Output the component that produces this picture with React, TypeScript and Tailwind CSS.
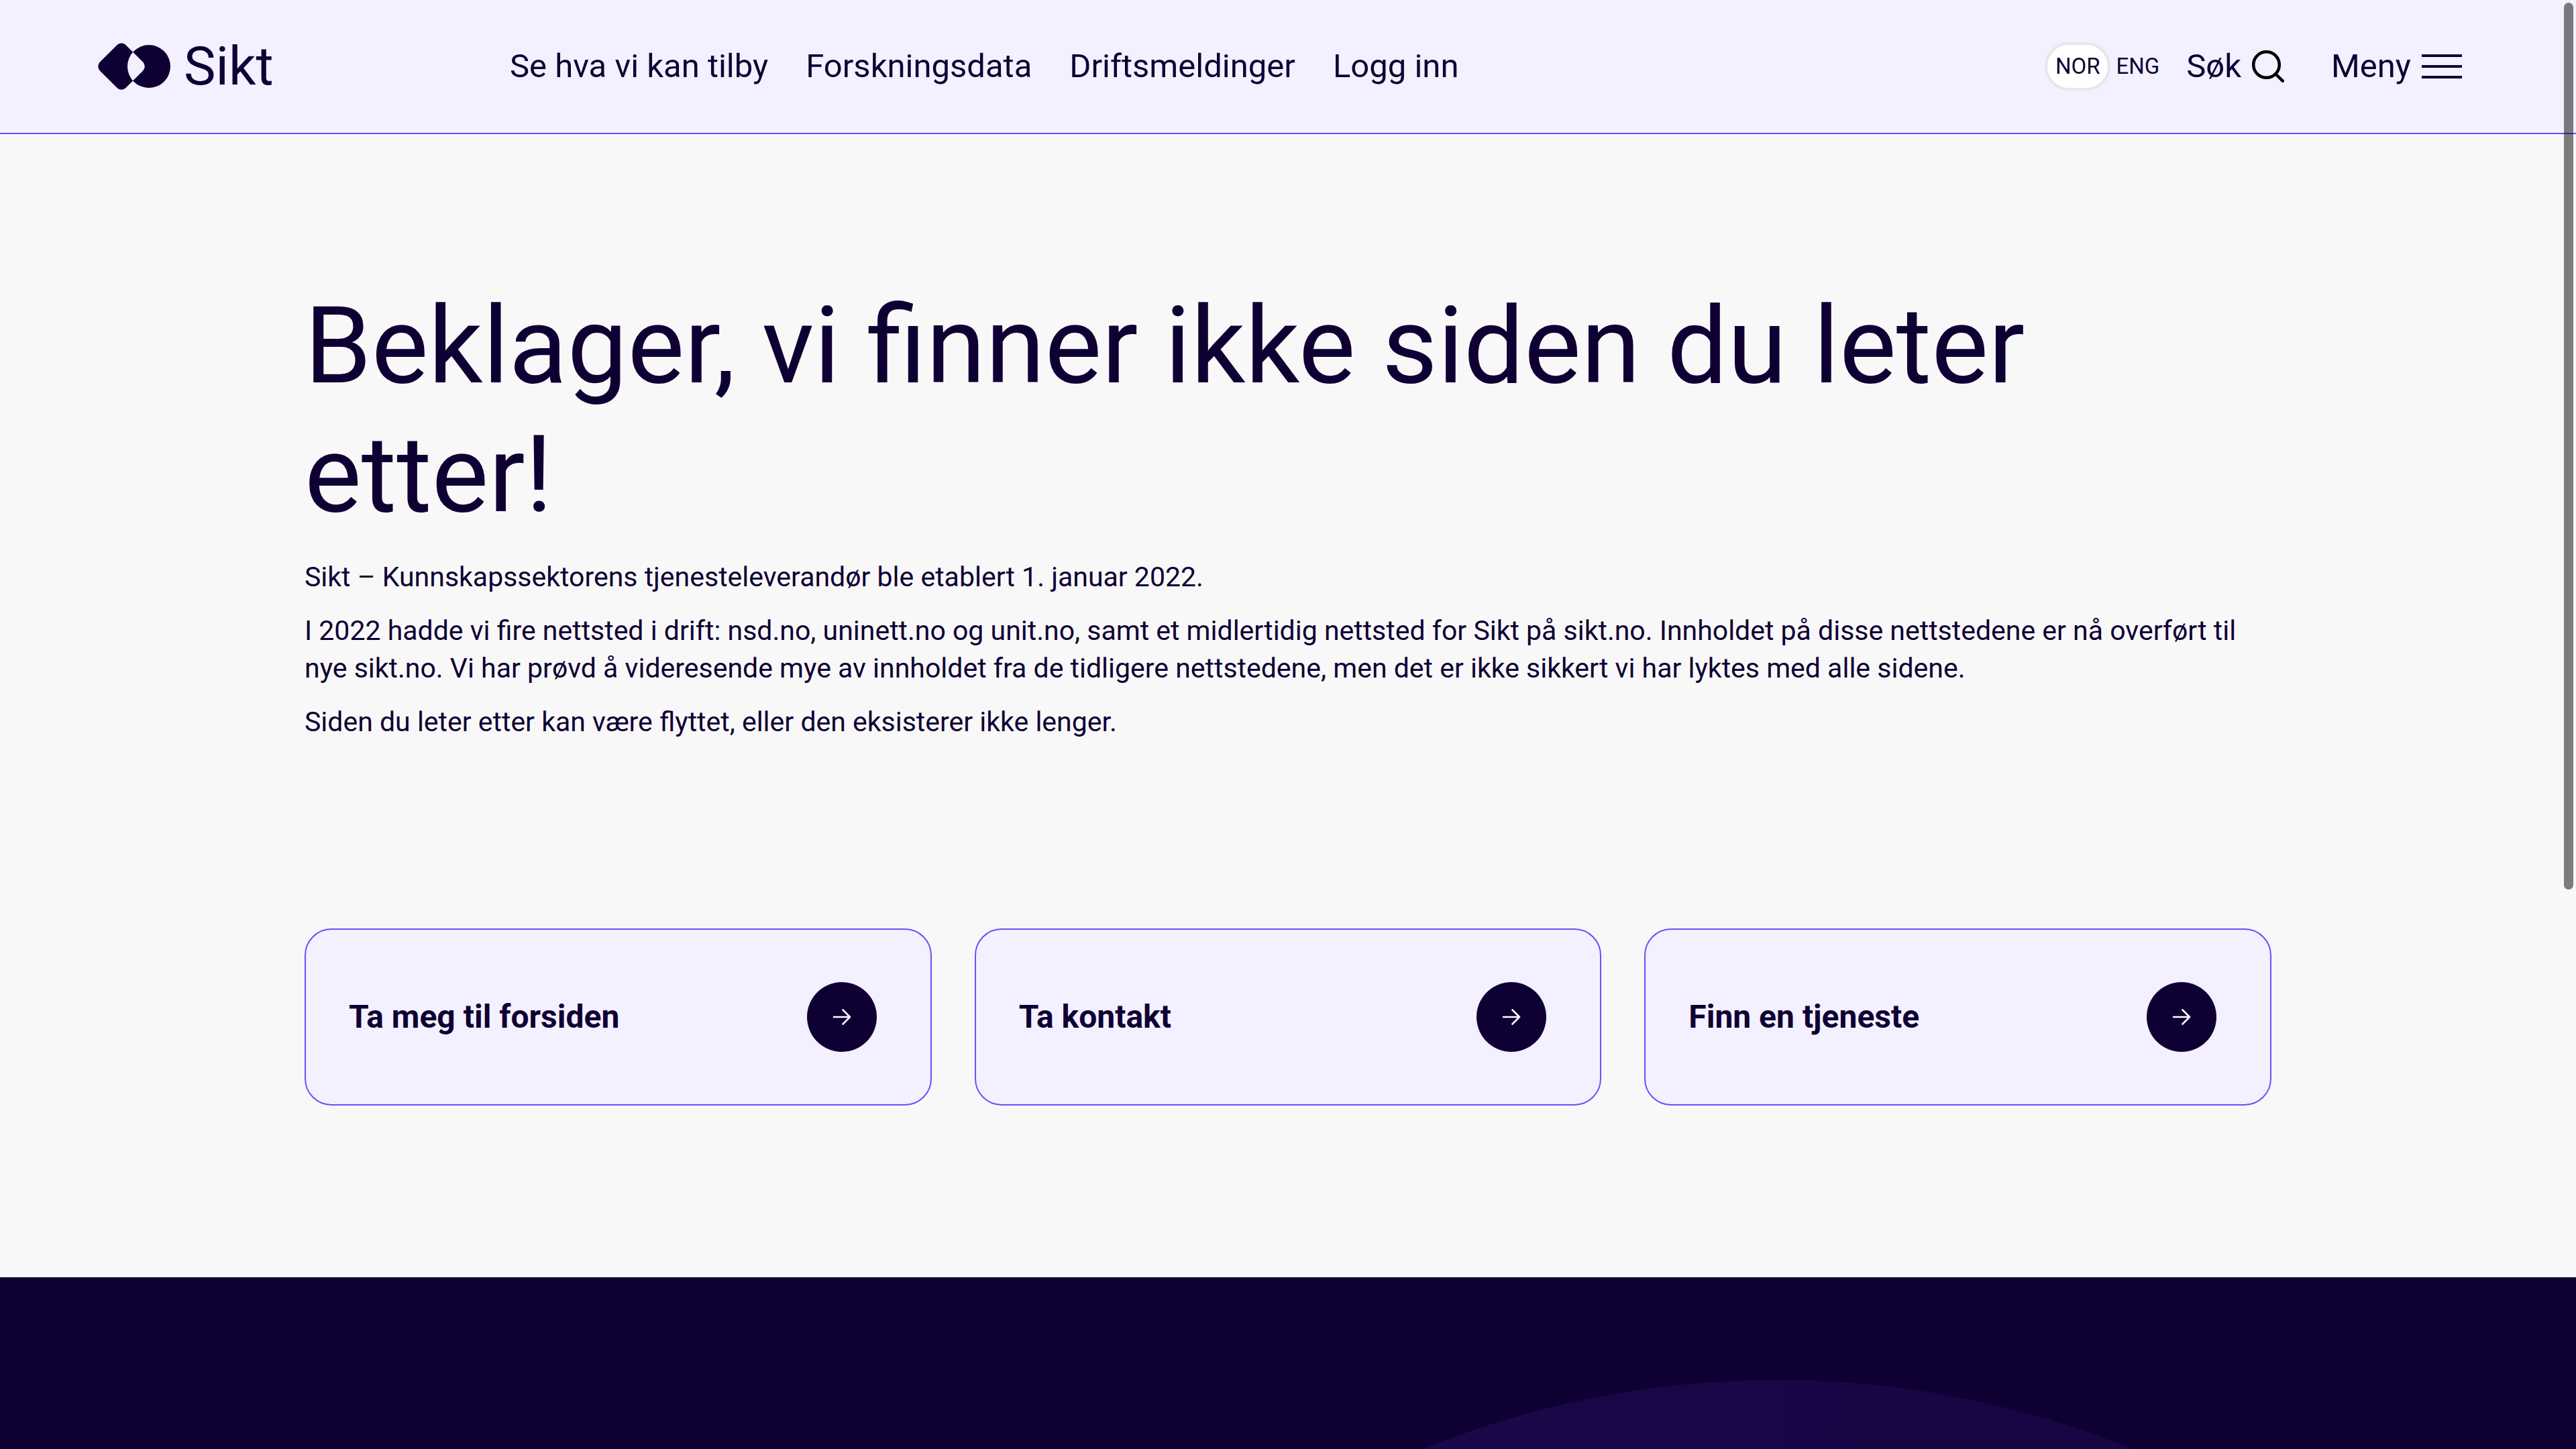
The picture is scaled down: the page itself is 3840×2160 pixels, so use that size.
const navLinks = ["Se hva vi kan tilby", "Forskningsdata", "Driftsmeldinger", "Logg inn"];
const cards = ["Ta meg til forsiden", "Ta kontakt", "Finn en tjeneste"];

function LogoMark() {
  return (
    <svg className="h-[70px] w-[108px]" viewBox="0 0 108 70" fill="currentColor" aria-hidden="true">
      <path
        fillRule="evenodd"
        d="M28.6 2.9A9 9 0 0 1 41.4 2.9L67.1 28.6A9 9 0 0 1 67.1 41.4L41.4 67.1A9 9 0 0 1 28.6 67.1L2.9 41.4A9 9 0 0 1 2.9 28.6ZM44 35A32 32 0 1 0 108 35A32 32 0 1 0 44 35Z"
      />
    </svg>
  );
}

function SearchIcon() {
  return (
    <svg className="size-12 text-black" viewBox="0 0 48 48" fill="none" stroke="currentColor" strokeWidth="4.5" strokeLinecap="round" aria-hidden="true">
      <circle cx="21.5" cy="21.5" r="19.3" />
      <path d="M35.5 35.5L45.7 45.7" />
    </svg>
  );
}

function MenuIcon() {
  return (
    <span className="flex w-[60px] flex-col gap-3" aria-hidden="true">
      <span className="h-1 bg-[#0f0034]" />
      <span className="h-1 bg-[#0f0034]" />
      <span className="h-1 bg-[#0f0034]" />
    </span>
  );
}

function ArrowIcon() {
  return (
    <svg className="size-8" viewBox="0 0 32 32" fill="none" stroke="currentColor" strokeWidth="2.6" strokeLinecap="round" strokeLinejoin="round" aria-hidden="true">
      <path d="M4 16H28M17.5 5.5L28 16L17.5 26.5" />
    </svg>
  );
}

function Header() {
  return (
    <header className="flex h-[200px] items-center border-b-2 border-[#6f4cff] bg-[#f3f0ff] pr-[170px] pl-[146px]">
      <a href="#" className="flex w-[614px] shrink-0 items-center gap-5" aria-label="Sikt">
        <LogoMark />
        <span className="text-[80px] leading-[80px]">Sikt</span>
      </a>
      <nav className="flex gap-[56px] text-[49px] leading-[64px]">
        {navLinks.map((label) => (
          <a key={label} href="#">
            {label}
          </a>
        ))}
      </nav>
      <div className="ml-auto flex items-center text-[49px] leading-[64px]">
        <div className="flex items-center gap-2 text-[33px] leading-[40px]">
          <a href="#" className="rounded-full border-4 border-[#e6e7eb] bg-white p-3" aria-current="true">
            NOR
          </a>
          <a href="#">ENG</a>
        </div>
        <button type="button" className="ml-10 flex items-center gap-4">
          Søk
          <SearchIcon />
        </button>
        <button type="button" className="ml-[70px] flex items-center gap-4">
          Meny
          <MenuIcon />
        </button>
      </div>
    </header>
  );
}

export default function App() {
  return (
    <div className="relative flex min-h-screen flex-col overflow-hidden bg-[#f8f8f8] font-[Roboto,sans-serif] text-[#0f0034]">
      <Header />
      <main className="px-[454px] pt-[220px] pb-[256px]">
        <h1 className="text-[160px] leading-[192px]">Beklager, vi finner ikke siden du leter etter!</h1>
        <div className="mt-7 flex flex-col gap-6 text-[41px] leading-[56px]">
          <p>Sikt – Kunnskapssektorens tjenesteleverandør ble etablert 1. januar 2022.</p>
          <p>
            I 2022 hadde vi fire nettsted i drift: nsd.no, uninett.no og unit.no, samt et midlertidig nettsted for Sikt på
            sikt.no. Innholdet på disse nettstedene er nå overført til nye sikt.no. Vi har prøvd å videresende mye av
            innholdet fra de tidligere nettstedene, men det er ikke sikkert vi har lyktes med alle sidene.
          </p>
          <p>Siden du leter etter kan være flyttet, eller den eksisterer ikke lenger.</p>
        </div>
        <div className="mt-[280px] grid grid-cols-3 gap-16">
          {cards.map((title) => (
            <a
              key={title}
              href="#"
              className="flex items-center justify-between rounded-[40px] border-2 border-[#6f4cff] bg-[#f3f0ff] py-[78px] pr-20 pl-16"
            >
              <span className="text-[48px] leading-[64px] font-bold">{title}</span>
              <span className="flex size-[104px] items-center justify-center rounded-full bg-[#0f0034] text-white">
                <ArrowIcon />
              </span>
            </a>
          ))}
        </div>
      </main>
      <footer className="relative min-h-64 flex-1 overflow-hidden bg-[#0f0034]">
        <div className="absolute top-[153px] left-[69%] size-[2820px] -translate-x-1/2 rounded-full bg-linear-to-r from-[#1d0a4e] to-[#15033e]" />
      </footer>
      <div className="absolute top-1 right-1 h-[1322px] w-3.5 rounded-full bg-black/50" />
    </div>
  );
}
